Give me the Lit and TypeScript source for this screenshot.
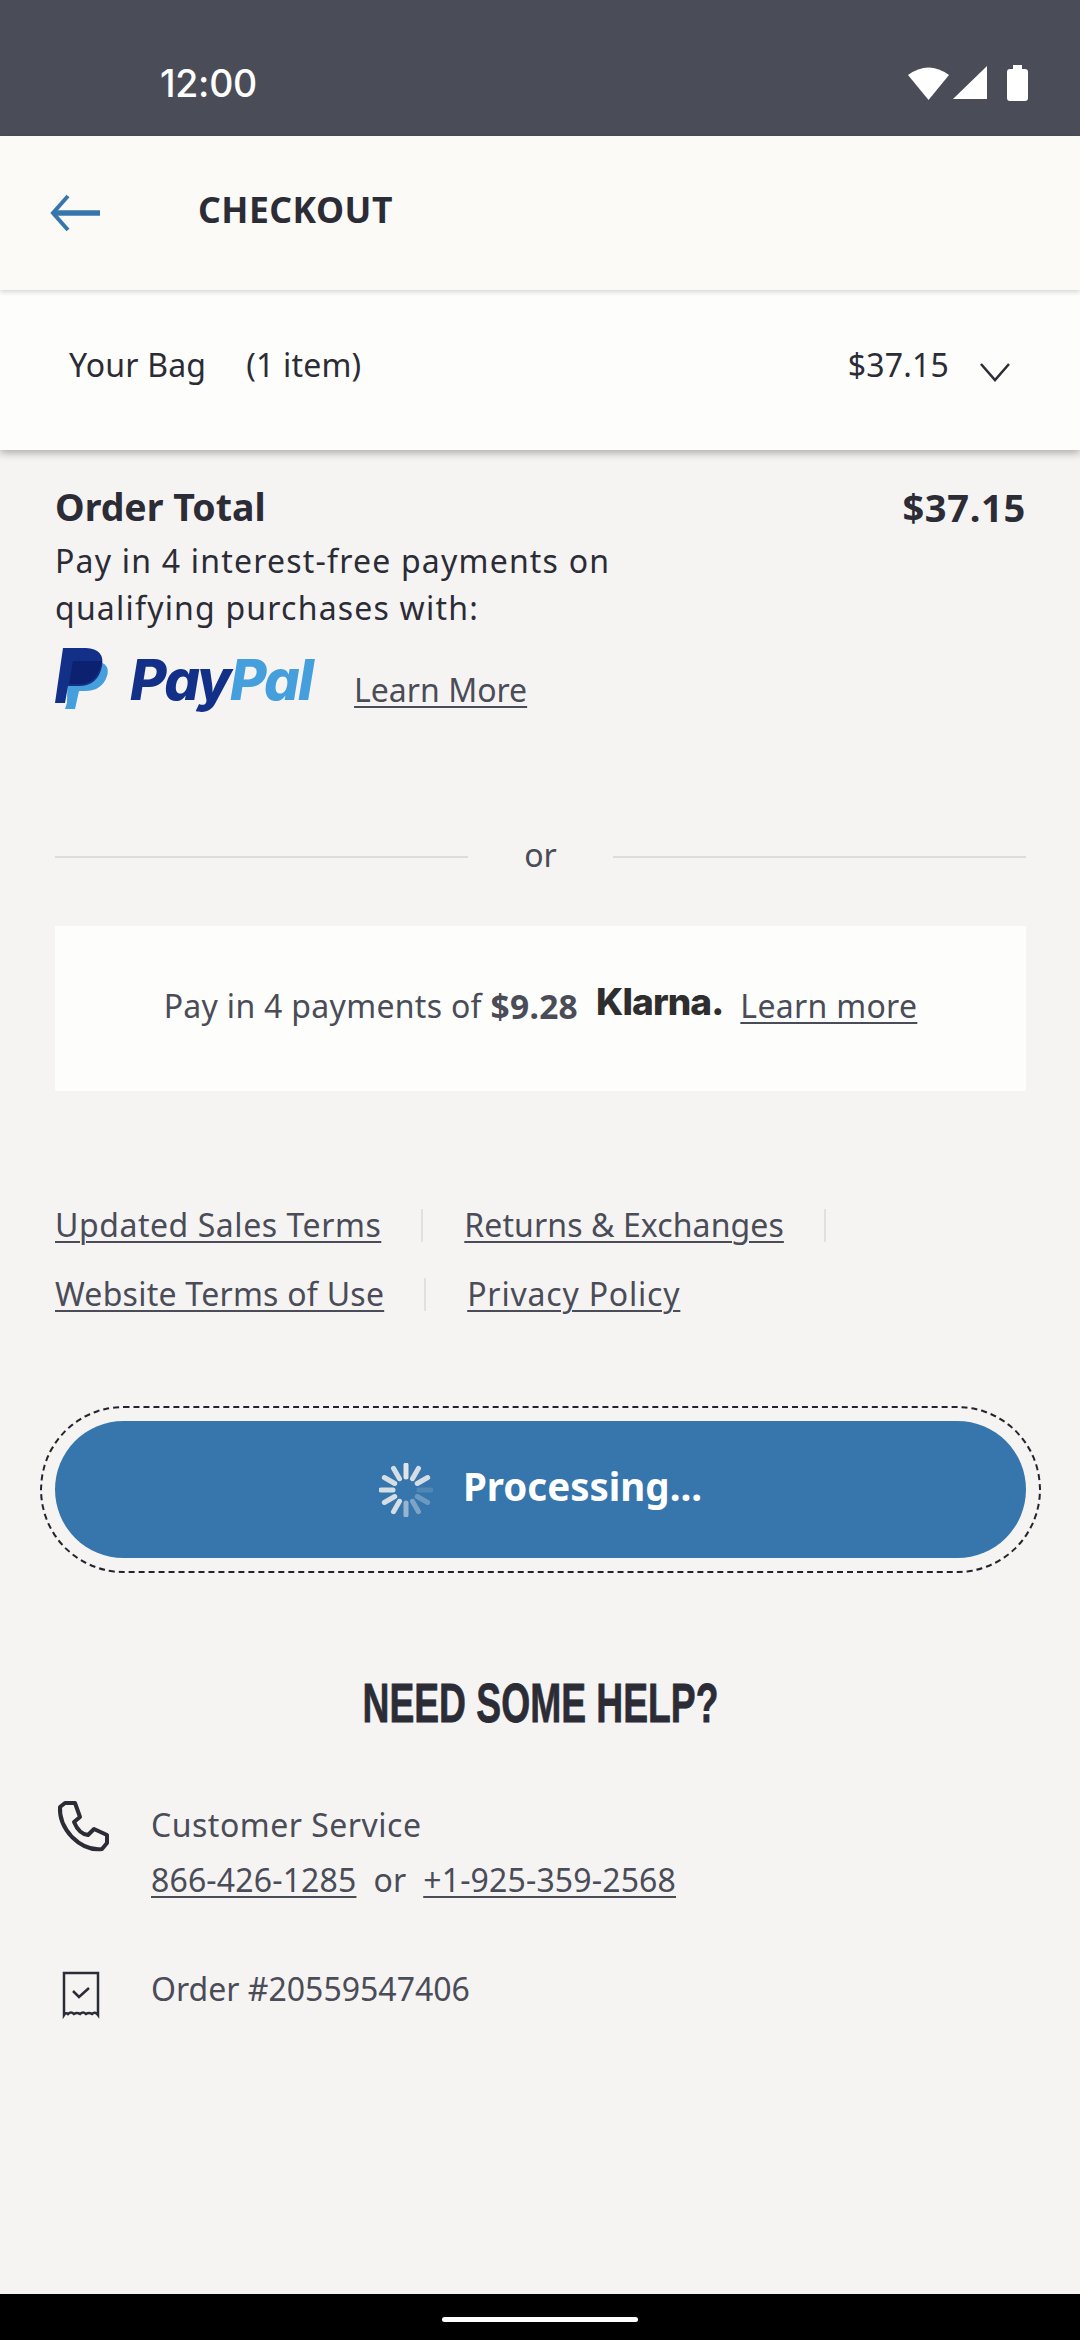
import { LitElement, html, css, svg } from "lit";
import { customElement } from "lit/decorators.js";

const SPOKES = [
  [0, 0.95], [30, 0.9], [60, 0.9], [90, 0.15], [120, 0.3], [150, 0.4], [180, 0.55], [210, 0.9], [240, 0.9], [270, 0.9], [300, 0.9], [330, 0.9],
];

@customElement("app-root")
export class AppRoot extends LitElement {
  static styles = css`
    :host { display: block; width: 1080px; height: 2340px; overflow: hidden; background: #f5f4f3; font-family: "Noto Sans", "Open Sans", sans-serif; color: #2b2c36; }
    * { box-sizing: border-box; }
    .page { display: flex; flex-direction: column; height: 2340px; }
    .status { height: 136px; flex: none; background: #4a4c58; display: flex; align-items: flex-start; justify-content: space-between; padding: 64px 52px 0 160px; }
    .time { font-family: Inter, Roboto, sans-serif; font-size: 37.5px; font-weight: 500; line-height: 40px; color: #fff; letter-spacing: -0.3px; }
    .status svg { display: block; margin-top: 1px; }
    .head { height: 154px; flex: none; background: #fbfaf6; display: flex; align-items: flex-start; padding: 51px 0 0 50px; box-shadow: 0 2px 5px rgba(0,0,0,.16); position: relative; z-index: 2; }
    .head svg { display: block; margin-top: 7px; }
    .head h1 { margin: 0 0 0 96px; font-size: 35.5px; line-height: 44px; font-weight: 700; letter-spacing: .5px; color: #2b2c36; }
    .bag { height: 160px; flex: none; background: #fdfdfb; display: flex; justify-content: space-between; padding: 54px 70px 0 69px; font-size: 32px; line-height: 42px; letter-spacing: .2px; box-shadow: 0 3px 8px rgba(0,0,0,.3); position: relative; z-index: 1; }
    .bag .l { display: flex; gap: 40px; }
    .bag .r { display: flex; }
    .bag svg { margin: 18px 0 0 31px; display: block; }
    .main { flex: 1; padding: 35px 54px 0 55px; display: flex; flex-direction: column; }
    .tot { display: flex; justify-content: space-between; font-size: 37.5px; line-height: 44px; font-weight: 700; }
    .tot span + span { font-size: 38px; letter-spacing: .7px; }
    .pay { font-size: 32px; line-height: 47px; letter-spacing: 1.2px; margin-top: 8px; color: #2b2c36; }
    .pp { display: flex; align-items: flex-start; margin-top: 17px; height: 62px; }
    .pp svg { display: block; flex: none; }
    .ppword { font-family: Inter, "Liberation Sans", sans-serif; font-style: italic; font-weight: 800; font-size: 56px; line-height: 62px; letter-spacing: -1.8px; margin: 1px 0 0 22px; color: #123087; }
    .ppword b { color: #459fdc; font-weight: 800; }
    a { color: #4a4c58; text-decoration: underline; text-underline-offset: 4px; text-decoration-thickness: 2px; }
    .pp a { font-size: 32px; line-height: 42px; margin: 21px 0 0 42px; }
    .or { display: flex; align-items: center; gap: 56px; margin-top: 124px; font-size: 32px; line-height: 42px; color: #4a4c58; }
    .or i { flex: 1; height: 2px; background: #dedcd8; margin-top: 4px; }
    .kl { margin-top: 50px; height: 165px; background: #fdfdfb; display: flex; justify-content: center; align-items: flex-start; padding-top: 59px; font-size: 32px; line-height: 42px; letter-spacing: .3px; color: #4a4c58; white-space: pre; }
    .kl strong { margin-left: 0; font-size: 33.5px; }
    .klarna { font-family: Inter, sans-serif; font-weight: 800; font-size: 37px; color: #2e2e2e; letter-spacing: -.9px; margin: -4px 17px 0 18px; }
    .links { margin-top: 113px; display: flex; flex-direction: column; gap: 27px; font-size: 32px; line-height: 42px; }
    .row { display: flex; align-items: center; height: 42px; }
    .row i { width: 2px; height: 33px; background: #e2e0dc; }
    .sep1 { margin: 0 41px 0 40px; }
    .sep2 { margin-left: 40px; }
    .l-sales { letter-spacing: .55px; }
    .l-returns { letter-spacing: .1px; }
    .l-site { letter-spacing: .25px; }
    .l-privacy { letter-spacing: .8px; }
    .btnw { margin: 91px -15px 0 -15px; border: 2px dashed #22232c; border-radius: 84px; padding: 13px; }
    .btn { height: 137px; border-radius: 69px; background: #3776ac; display: flex; align-items: center; justify-content: center; gap: 32px; color: #fff; font-size: 38.5px; font-weight: 700; }
    .btn span { margin-top: -7px; }
    .btn svg { display: block; margin-right: -2px; }
    h2 { margin: 100px 0 0; text-align: center; font-family: "Liberation Sans", sans-serif; font-weight: 700; font-size: 56px; line-height: 60px; color: #2b2c36; transform: scaleX(.665); white-space: nowrap; -webkit-text-stroke: .8px #2b2c36; }
    .info { display: flex; margin-top: 64px; font-size: 32px; line-height: 55px; color: #4a4c58; }
    .info svg { flex: none; display: block; margin-top: 4px; }
    .info .t { margin-left: 40px; }
    .ls { letter-spacing: .5px; }
    .nums { letter-spacing: .15px; }
    .info.o { margin-top: 54px; }
    .info.o svg { margin-top: 3px; }
    .nav { flex: none; height: 46px; background: #000; display: flex; justify-content: center; padding-top: 23px; }
    .nav i { width: 196px; height: 5px; border-radius: 3px; background: #fff; }
  `;

  render() {
    return html`<div class="page">
      <div class="status">
        <span class="time">12:00</span>
        <svg width="120" height="36" viewBox="0 0 120 36" fill="#fff">
          <path d="M0 10 Q20.5 -5 41 10 L20.5 35Z"/>
          <path d="M45 34 L79 1 V34Z"/>
          <path d="M99 7 a3 3 0 0 1 3 -3 h3 v-4 h9 v4 h3 a3 3 0 0 1 3 3 v26 a3 3 0 0 1 -3 3 h-15 a3 3 0 0 1 -3 -3Z"/>
        </svg>
      </div>
      <div class="head">
        <svg width="52" height="38" viewBox="0 0 52 38" fill="none" stroke="#3776ac"><path d="M18 2 L3 19 L18 36" stroke-width="4"/><path d="M4 19 H50" stroke-width="5.5"/></svg>
        <h1>CHECKOUT</h1>
      </div>
      <div class="bag">
        <div class="l"><span>Your Bag</span><span>(1 item)</span></div>
        <div class="r"><span>$37.15</span><svg width="30" height="20" viewBox="0 0 30 20" fill="none" stroke="#2b2c36" stroke-width="2.5"><path d="M1 2 L15 18 L29 2"/></svg></div>
      </div>
      <div class="main">
        <div class="tot"><span>Order Total</span><span>$37.15</span></div>
        <div class="pay">Pay in 4 interest-free payments on<br>qualifying purchases with:</div>
        <div class="pp">
          <svg width="53" height="62" viewBox="0 0 53 62">
            <path fill="#459fdc" d="M13 13 H40 Q56 15 52 28 Q47 43 30 43 H24 L20 61 H10 L12 55Z"/>
            <path fill="#123087" d="M8 0 H31 Q50 1 47 18 Q43 38 24 38 H13 L10 55 H0Z"/>
            <path fill="#0c2170" d="M18 13 H47 Q43 36 24 36 H14Z"/>
          </svg>
          <span class="ppword">Pay<b>Pal</b></span>
          <a>Learn More</a>
        </div>
        <div class="or"><i></i><span>or</span><i></i></div>
        <div class="kl"><span>Pay in 4 payments of </span><strong>$9.28</strong><span class="klarna">Klarna.</span><a>Learn more</a></div>
        <div class="links">
          <div class="row"><a class="l-sales">Updated Sales Terms</a><i class="sep1"></i><a class="l-returns">Returns &amp; Exchanges</a><i class="sep2"></i></div>
          <div class="row"><a class="l-site">Website Terms of Use</a><i class="sep1"></i><a class="l-privacy">Privacy Policy</a></div>
        </div>
        <div class="btnw"><div class="btn">
          <svg width="54" height="54" viewBox="-27 -27 54 54">
            ${SPOKES.map(([a, o]) => svg`<line x1="0" y1="-13" x2="0" y2="-25" stroke="#e8eaec" stroke-width="5" stroke-linecap="round" opacity=${o} transform="rotate(${a})"></line>`)}
          </svg>
          <span>Processing...</span>
        </div></div>
        <h2>NEED SOME HELP?</h2>
        <div class="info">
          <svg width="56" height="56" viewBox="-1 0 56 56" fill="none" stroke="#2b2c36" stroke-width="4" stroke-linejoin="round"><path d="M4 6 L9 2 H19 L24 16 L18 21 Q23 33 32 34 L38 28 L51 34 V42 L46 48 Q30 50 16 36 Q3 22 4 6Z"/></svg>
          <div class="t"><span class="ls">Customer Service</span><br><span class="nums"><a>866-426-1285</a>&nbsp; or &nbsp;<a>+1-925-359-2568</a></span></div>
        </div>
        <div class="info o">
          <svg width="56" height="56" viewBox="0 0 56 56" fill="none" stroke="#2b2c36" stroke-width="2.5"><path d="M9 9 H43 V51 Q40 47 37 50 Q34 48 31 50 Q28 47 25 50 Q22 48 19 50 Q16 47 13 50 Q11 48 9 51Z"/><path d="M18 27 L24 33 L34 24"/></svg>
          <div class="t">Order #20559547406</div>
        </div>
      </div>
      <div class="nav"><i></i></div>
    </div>`;
  }
}
